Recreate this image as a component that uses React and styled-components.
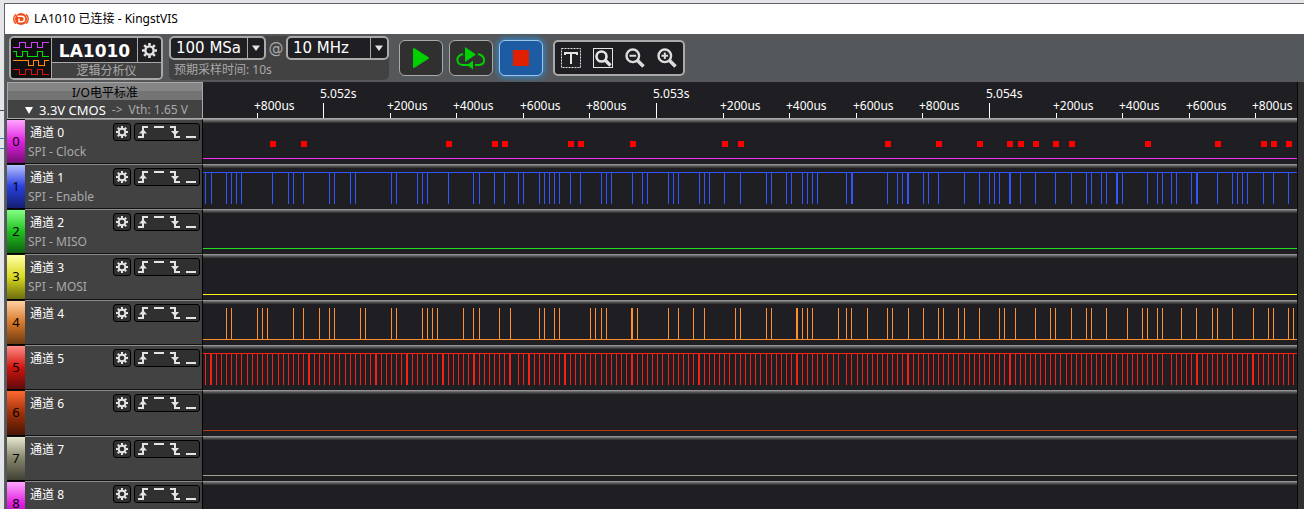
import styled, { createGlobalStyle, css } from "styled-components";

const GlobalStyle = createGlobalStyle`
    * { box-sizing: border-box; }

    body {
        margin: 0;
        overflow: hidden;
        background-color: #e4e5e8;
        font-family: "Noto Sans", "Noto Sans CJK SC", sans-serif;
        font-size: 12px;
        line-height: 16px;
    }

    button, select {
        margin: 0;
        padding: 0;
        border: none;
        background: none;
        color: inherit;
        font: inherit;
    }
`;

const Desktop = styled.div`
    display: flex;
    height: 100vh;
    padding: 3px 0 0 4px;
    background-image:
        linear-gradient(#4b4b55, #4b4b55),
        linear-gradient(#3c7fc0, #3c7fc0),
        linear-gradient(#3c7fc0, #3c7fc0);
    background-size: 4px 1px;
    background-repeat: no-repeat;
    background-position: 0 110px, 0 138px, 0 148px;
`;

const Window = styled.div`
    flex: 1;
    min-width: 0;
    display: flex;
    flex-direction: column;
    border-top: 1px solid #606266;
    border-left: 1px solid #606266;
    background-color: #55585b;
`;

const TitleBar = styled.header`
    display: flex;
    align-items: center;
    gap: 5px;
    height: 30px;
    flex-shrink: 0;
    padding-left: 8px;
    background-color: #fff;
    color: #000;

    h1 {
        margin: 0;
        font-size: 12px;
        font-weight: 400;
    }
`;

const ToolBar = styled.div`
    display: flex;
    align-items: flex-start;
    height: 48px;
    flex-shrink: 0;
    padding: 2px 4px;
`;

const frame = css`
    border: 2px solid #a9a9a9;
    border-radius: 5px;
    background-color: #1f1f23;
    overflow: hidden;
`;

const Device = styled.div`
    ${frame}
    display: flex;
    width: 154px;
    height: 44px;
    margin-right: 6px;
`;

const DeviceSide = styled.div`
    flex: 1;
    display: flex;
    flex-direction: column;
    border-left: 1px solid #a9a9a9;
`;

const DeviceTop = styled.div`
    display: flex;
    height: 25px;
    border-bottom: 1px solid #a9a9a9;
    color: #fff;

    strong {
        flex: 1;
        text-align: center;
        font-family: "DejaVu Sans", sans-serif;
        font-size: 17px;
        line-height: 26px;
    }

    button {
        display: grid;
        place-items: center;
        width: 24px;
        border-left: 1px solid #a9a9a9;
    }
`;

const DeviceKind = styled.div`
    flex: 1;
    background-color: #424242;
    color: #a9a9a9;
    text-align: center;
    line-height: 16px;
`;

const Sampling = styled.div`
    width: 220px;
    height: 44px;
    margin-right: 10px;
    border-radius: 5px;
    background-color: #424242;
    color: #a9a9a9;
`;

const SamplingRow = styled.div`
    display: flex;
    justify-content: space-between;
    align-items: center;
    font-family: "DejaVu Sans", sans-serif;
    font-size: 15px;
`;

const SamplingNote = styled.div`
    padding-left: 5px;
    line-height: 20px;
`;

const Picker = styled.label`
    ${frame}
    display: flex;
    width: ${(props) => props.$width};
    height: 24px;

    select {
        flex: 1;
        min-width: 0;
        padding-left: 5px;
        appearance: none;
        color: #fff;
        font-family: "DejaVu Sans", sans-serif;
        font-size: 15px;
        line-height: 20px;
    }

    svg {
        flex-shrink: 0;
        width: 17px;
        height: 20px;
        border-left: 1px solid #a9a9a9;
    }
`;

const RunButton = styled.button`
    display: grid;
    place-items: center;
    width: 44px;
    height: 36px;
    margin: 4px 6px 0 0;
    border: 1px solid #a9a9a9;
    border-radius: 6px;
    background-color: #303030;

    ${(props) => props.$active && css`
        background-color: #1d5ba3;
        border-color: #9fc4e8;
        box-shadow: 0 0 6px 1px #2d8fdc;
    `}
`;

const ZoomGroup = styled.div`
    ${frame}
    display: flex;
    align-items: center;
    gap: 12px;
    height: 36px;
    margin: 4px 0 0 4px;
    padding: 0 6px;

    button {
        display: grid;
        width: 20px;
        height: 20px;
    }
`;

const Workspace = styled.div`
    flex: 1;
    min-height: 0;
    display: flex;
    padding-left: 2px;
`;

const Board = styled.main`
    flex: 1;
    min-width: 0;
    overflow: hidden;
    background-color: #1f1f23;
`;

const SideStrip = styled.div`
    width: 7px;
    border-left: 1px solid #08080a;
    background-color: #303030;
`;

const HeadRow = styled.div`
    display: flex;
    height: 37px;
    border-bottom: 1px solid #a9a9a9;
`;

const Level = styled.div`
    width: 196px;
    flex-shrink: 0;
    border: 1px solid #a9a9a9;
    border-bottom: none;
    background-color: #424242;
`;

const LevelTitle = styled.div`
    height: 17px;
    background: linear-gradient(#858585 50%, #747474 50%);
    color: #000;
    text-align: center;
    line-height: 20px;
`;

const LevelValue = styled.button`
    display: flex;
    align-items: center;
    gap: 6px;
    height: 18px;
    padding: 2px 0 0 16px;
    color: #a9a9a9;

    b {
        color: #fff;
        font-size: 13px;
        font-weight: 400;
    }
`;

const Ruler = styled.svg`
    flex: 1;
    min-width: 0;
    height: 36px;
    overflow: hidden;
    fill: #fff;
    font-size: 12px;
`;

const Row = styled.section`
    display: flex;
    height: ${(props) => (props.$tall ? "46px" : "45px")};
`;

const Gutter = styled.div`
    display: grid;
    place-items: center;
    width: 18px;
    padding-bottom: 2px;
    border-top: 1px solid #111;
    border-bottom: 1px solid #000;
    background: linear-gradient(${(props) => props.$shades});
    color: #000;
    font-size: 13px;
`;

const Channel = styled.div`
    display: flex;
    justify-content: space-between;
    width: 178px;
    padding: 3px 2px 0 3px;
    border-top: 1px solid #8b8b8b;
    border-right: 1px solid #000;
    border-bottom: 1px solid #111;
    background-color: #424242;
    color: #a9a9a9;

    h2 {
        margin: 0;
        padding: 2px 0 3px 2px;
        color: #fff;
        font-size: 12px;
        font-weight: 400;
    }

    p {
        margin: 0;
    }
`;

const Tools = styled.div`
    display: flex;
    gap: 3px;
`;

const ToolBox = styled.div`
    display: flex;
    height: 18px;
    border: 1px solid #000;
    border-radius: 3px;
    background-color: #303030;

    button {
        display: grid;
        place-items: center;
        width: 16px;
        height: 16px;
    }
`;

const Plot = styled.div`
    flex: 1;
    min-width: 0;
    background: linear-gradient(
        #929292 0 1px, #6c6c6c 1px 2px, #505050 2px 3px, #38383a 3px 4px, #1f1f23 4px
    );

    svg {
        display: block;
        width: 100%;
        height: 100%;
    }
`;

// sample columns, in pixels from the left edge of the plot
const CLOCK_MARKS = [
    67, 98, 243, 289, 299, 365, 375, 427, 519, 535, 682, 733, 774, 804, 815, 830,
    850, 866, 942, 1012, 1058, 1068, 1083,
];

const ENABLE = [
    2, 8, 23, 28, 33, 38, 69, 85, 90, 100, 126, 131, 147, 152, 188, 193, 214, 219, 224,
    245, 270, 276, 291, 301, 315, 320, 336, 341, 346, 351, 356, 367, 377, 398, 403, 408,
    429, 439, 444, 465, 470, 475, 496, 501, 506, 521, 537, 563, 568, 583, 588, 599, 604,
    609, 614, 643, 648, 649, 684, 694, 699, 704, 705, 720, 725, 735, 761, 776, 786, 791,
    796, 806, 807, 817, 832, 852, 868, 883, 888, 898, 903, 913, 914, 919, 944, 954, 959,
    968, 973, 988, 993, 994, 1014, 1029, 1034, 1039, 1044, 1060, 1070, 1085,
];

const CH4 = [
    23, 28, 54, 59, 64, 90, 100, 116, 126, 131, 157, 162, 188, 193, 219, 224, 229, 234,
    260, 270, 276, 296, 307, 336, 341, 351, 356, 387, 392, 398, 403, 428, 429, 434, 465,
    475, 490, 501, 532, 537, 563, 568, 593, 594, 599, 604, 609, 635, 643, 648, 664, 684,
    689, 705, 720, 735, 740, 755, 761, 776, 796, 801, 812, 832, 847, 852, 868, 883, 888,
    903, 924, 939, 944, 954, 959, 978, 993, 1009, 1014, 1029, 1050, 1065, 1070, 1085, 1090,
];

const CH5 = [
    2, 7, 8, 13, 18, 23, 28, 33, 38, 44, 49, 54, 59, 64, 69, 75, 80, 85, 90, 95, 100,
    105, 106, 111, 116, 121, 126, 131, 136, 142, 147, 152, 157, 162, 167, 172, 173, 178,
    183, 188, 193, 198, 203, 204, 209, 214, 219, 224, 229, 234, 239, 240, 245, 250, 255,
    260, 265, 270, 271, 276, 281, 286, 291, 296, 301, 306, 307, 315, 320, 325, 326, 331,
    336, 341, 346, 351, 356, 361, 362, 367, 372, 377, 382, 387, 392, 398, 403, 408, 413,
    418, 423, 428, 429, 434, 439, 444, 449, 454, 459, 465, 470, 475, 480, 485, 490, 495,
    496, 501, 506, 511, 516, 521, 526, 532, 537, 542, 547, 552, 557, 563, 568, 573, 578,
    583, 588, 593, 594, 599, 604, 609, 614, 619, 624, 630, 635, 643, 648, 654, 659, 664,
    669, 674, 679, 684, 689, 694, 699, 704, 705, 710, 715, 720, 725, 730, 735, 740, 745,
    750, 755, 761, 766, 771, 776, 781, 786, 791, 796, 801, 806, 807, 812, 817, 822, 827,
    832, 837, 842, 847, 852, 857, 863, 868, 873, 878, 883, 888, 893, 898, 903, 908, 913,
    919, 924, 929, 934, 939, 944, 949, 954, 959, 968, 973, 978, 983, 988, 993, 994, 999,
    1004, 1009, 1014, 1019, 1024, 1029, 1034, 1039, 1044, 1049, 1050, 1055, 1060, 1065,
    1070, 1075, 1080, 1085, 1090,
];

const CHANNELS = [
    { role: "SPI - Clock", line: "#f531f5", shades: "#ffa6ff, #e01fe0 50%, #760f76", marks: CLOCK_MARKS },
    { role: "SPI - Enable", line: "#3355ff", shades: "#b4c0ff, #2a3fe0 50%, #141f70", pulses: ENABLE, idleHigh: true },
    { role: "SPI - MISO", line: "#1fe01f", shades: "#84ff84, #1fc01f 50%, #0f600f" },
    { role: "SPI - MOSI", line: "#ffff1f", shades: "#ffffa6, #d8d81f 50%, #6c6c0f", tall: true },
    { line: "#ff9030", shades: "#ffd0a0, #d8782a 50%, #6c3a10", pulses: CH4 },
    { line: "#f81f14", shades: "#ff8a84, #d0140f 50%, #600a08", pulses: CH5, idleHigh: true },
    { line: "#b83a10", shades: "#ff6830, #a0300a 50%, #4a1604", tall: true },
    { line: "#a0a08c", shades: "#e8e8d0, #84846c 50%, #404034" },
    { line: "#f531f5", shades: "#ffa6ff, #e01fe0 50%, #760f76" },
];

const Gear = ({ size = 12 }) => (
    <svg width={size} height={size} viewBox="-6 -6 12 12" fill="none" stroke="#e4e4e4">
        <circle r="3.3" strokeWidth="1.9" />
        {[0, 45, 90, 135, 180, 225, 270, 315].map((angle) => (
            <path key={angle} d="M0 -3.8V-6" strokeWidth="2.1" transform={`rotate(${angle})`} />
        ))}
    </svg>
);

const Logo = () => (
    <svg width="16" height="14" viewBox="0 0 16 14">
        <circle cx="8" cy="7" r="6" fill="#f04a16" />
        <path d="M3 2.2C0 4.6 0 9.4 3 11.8M13 2.2C16 4.6 16 9.4 13 11.8" fill="none" stroke="#f04a16" strokeWidth="1.4" />
        <path d="M4.4 4.2H8.6C12.4 4.2 12.4 9.8 8.6 9.8H6V6.6" fill="none" stroke="#fff" strokeWidth="1.5" />
    </svg>
);

const DeviceIcon = () => (
    <svg width="40" height="40" viewBox="0 0 40 40" fill="none" shapeRendering="crispEdges">
        <rect width="40" height="40" fill="#101010" />
        <path d="M2 9.5H8.5V4.5H14.5V9.5H20.5V4.5H26.5V9.5H31.5V4.5H38" stroke="#d040ff" />
        <path d="M2 13.5H5.5V18.5H11.5V13.5H16.5V18.5H26.5V13.5H31.5V18.5H38" stroke="#00e000" />
        <path d="M2 22.5H17.5V27.5H22.5V22.5H27.5V27.5H33.5V22.5H38" stroke="#ff8c10" />
        <path d="M2 31.5H8.5V36.5H14.5V31.5H20.5V36.5H26.5V31.5H31.5V36.5H38" stroke="#e01010" />
    </svg>
);

const Arrow = () => (
    <svg viewBox="0 0 16 20"><path d="M4 7.5H12L8 13Z" fill="#e4e4e4" /></svg>
);

const Magnifier = ({ children }) => (
    <svg width="20" height="20" fill="none" stroke="#dcdcdc">
        <path d="M12.5 12.5L18.5 18.5" strokeWidth="3.6" />
        <circle cx="7.8" cy="7.8" r="6.3" strokeWidth="2.4" />
        {children}
    </svg>
);

const TRIGGERS = [
    { label: "上升沿", d: "M3 13H8V3H13", head: "M4 9.5L8 5L12 9.5Z" },
    { label: "高电平", d: "M3 3H13" },
    { label: "下降沿", d: "M3 3H8V13H13", head: "M4 7L8 11.5L12 7Z" },
    { label: "低电平", d: "M3 13H13" },
];

const TimeRuler = () => {
    const ticks = Array.from({ length: 16 }, (_, i) => ({
        x: Math.floor(54 + i * 66.59),
        step: (i + 4) % 5,
        second: 51 + Math.floor((i + 4) / 5),
    }));

    return (
        <Ruler>
            {ticks.map(({ x, step, second }) => (
                <g key={x}>
                    <rect x={x} y={step === 0 ? 21 : 31} width="1" height="15" />
                    <text x={x - 3} y={step === 0 ? 16 : 28}>
                        {step === 0 ? `5.0${second}s` : `+${step * 200}us`}
                    </text>
                </g>
            ))}
        </Ruler>
    );
};

const Wave = ({ line, pulses = [], marks = [], idleHigh, tall }) => {
    const low = tall ? 40 : 39;

    return (
        <svg shapeRendering="crispEdges" fill={line}>
            <rect x="0" y={idleHigh ? 8 : low} width="100%" height="1" />
            {pulses.map((x) => <rect key={x} x={x} y="8" width="1" height="32" />)}
            {marks.map((x) => <rect key={x} x={x} y="22" width="6" height="6" fill="#ff0000" />)}
        </svg>
    );
};

const ChannelRow = ({ index, channel }) => (
    <Row $tall={channel.tall}>
        <Gutter $shades={channel.shades}>{index}</Gutter>
        <Channel>
            <div>
                <h2>通道 {index}</h2>
                <p>{channel.role}</p>
            </div>
            <Tools>
                <ToolBox>
                    <button aria-label="通道设置"><Gear /></button>
                </ToolBox>
                <ToolBox>
                    {TRIGGERS.map(({ label, d, head }) => (
                        <button key={label} aria-label={label}>
                            <svg width="16" height="16">
                                <path d={d} fill="none" stroke="#e4e4e4" strokeWidth="2" />
                                {head && <path d={head} fill="#e4e4e4" />}
                            </svg>
                        </button>
                    ))}
                </ToolBox>
            </Tools>
        </Channel>
        <Plot>
            <Wave {...channel} />
        </Plot>
    </Row>
);

export default function App() {
    return (
        <Desktop>
            <GlobalStyle />
            <Window>
                <TitleBar>
                    <Logo />
                    <h1>LA1010 已连接 - KingstVIS</h1>
                </TitleBar>

                <ToolBar>
                    <Device>
                        <DeviceIcon />
                        <DeviceSide>
                            <DeviceTop>
                                <strong>LA1010</strong>
                                <button aria-label="设备设置"><Gear size={15} /></button>
                            </DeviceTop>
                            <DeviceKind>逻辑分析仪</DeviceKind>
                        </DeviceSide>
                    </Device>

                    <Sampling>
                        <SamplingRow>
                            <Picker $width="97px">
                                <select aria-label="采样深度"><option>100 MSa</option></select>
                                <Arrow />
                            </Picker>
                            @
                            <Picker $width="103px">
                                <select aria-label="采样率"><option>10 MHz</option></select>
                                <Arrow />
                            </Picker>
                        </SamplingRow>
                        <SamplingNote>预期采样时间: 10s</SamplingNote>
                    </Sampling>

                    <RunButton aria-label="开始">
                        <svg width="18" height="22"><path d="M2 2V20L16 11Z" fill="#00d000" stroke="#00d000" strokeWidth="2" strokeLinejoin="round" /></svg>
                    </RunButton>
                    <RunButton aria-label="循环">
                        <svg width="30" height="24" fill="#00d000">
                            <path d="M9 1V16L20 8.5Z" />
                            <path d="M7 8C-1 10 0 19 7 19H14M19 19H23C30 19 30 10 22 8" fill="none" stroke="#00d000" strokeWidth="2" />
                            <path d="M17 14.5V23.5L11 19Z" />
                        </svg>
                    </RunButton>
                    <RunButton $active aria-label="停止">
                        <svg width="16" height="16"><rect width="16" height="16" fill="#e02000" /></svg>
                    </RunButton>

                    <ZoomGroup>
                        <button aria-label="文本标记">
                            <svg width="20" height="20" fill="none" stroke="#e4e4e4">
                                <rect x="0.5" y="0.5" width="19" height="19" strokeDasharray="2 1" />
                                <path d="M4 7V5H16V7M10 5V16" strokeWidth="2" />
                            </svg>
                        </button>
                        <button aria-label="适合窗口">
                            <svg width="20" height="20" fill="none" stroke="#e4e4e4">
                                <rect x="0.5" y="0.5" width="19" height="19" />
                                <circle cx="8.5" cy="8.5" r="5" strokeWidth="2.6" />
                                <path d="M12 12L17.5 17.5" strokeWidth="3.2" />
                            </svg>
                        </button>
                        <button aria-label="缩小"><Magnifier><path d="M4.5 7.8H11.1" strokeWidth="2" /></Magnifier></button>
                        <button aria-label="放大"><Magnifier><path d="M4.5 7.8H11.1M7.8 4.5V11.1" strokeWidth="2" /></Magnifier></button>
                    </ZoomGroup>
                </ToolBar>

                <Workspace>
                    <Board>
                        <HeadRow>
                            <Level>
                                <LevelTitle>I/O电平标准</LevelTitle>
                                <LevelValue>
                                    <svg width="9" height="7"><path d="M1 0H9L5 7Z" fill="#fff" /></svg>
                                    <b>3.3V CMOS</b>
                                    <span>-&gt;</span>
                                    <span>Vth: 1.65 V</span>
                                </LevelValue>
                            </Level>
                            <TimeRuler />
                        </HeadRow>
                        {CHANNELS.map((channel, index) => (
                            <ChannelRow key={index} index={index} channel={channel} />
                        ))}
                    </Board>
                    <SideStrip />
                </Workspace>
            </Window>
        </Desktop>
    );
}
